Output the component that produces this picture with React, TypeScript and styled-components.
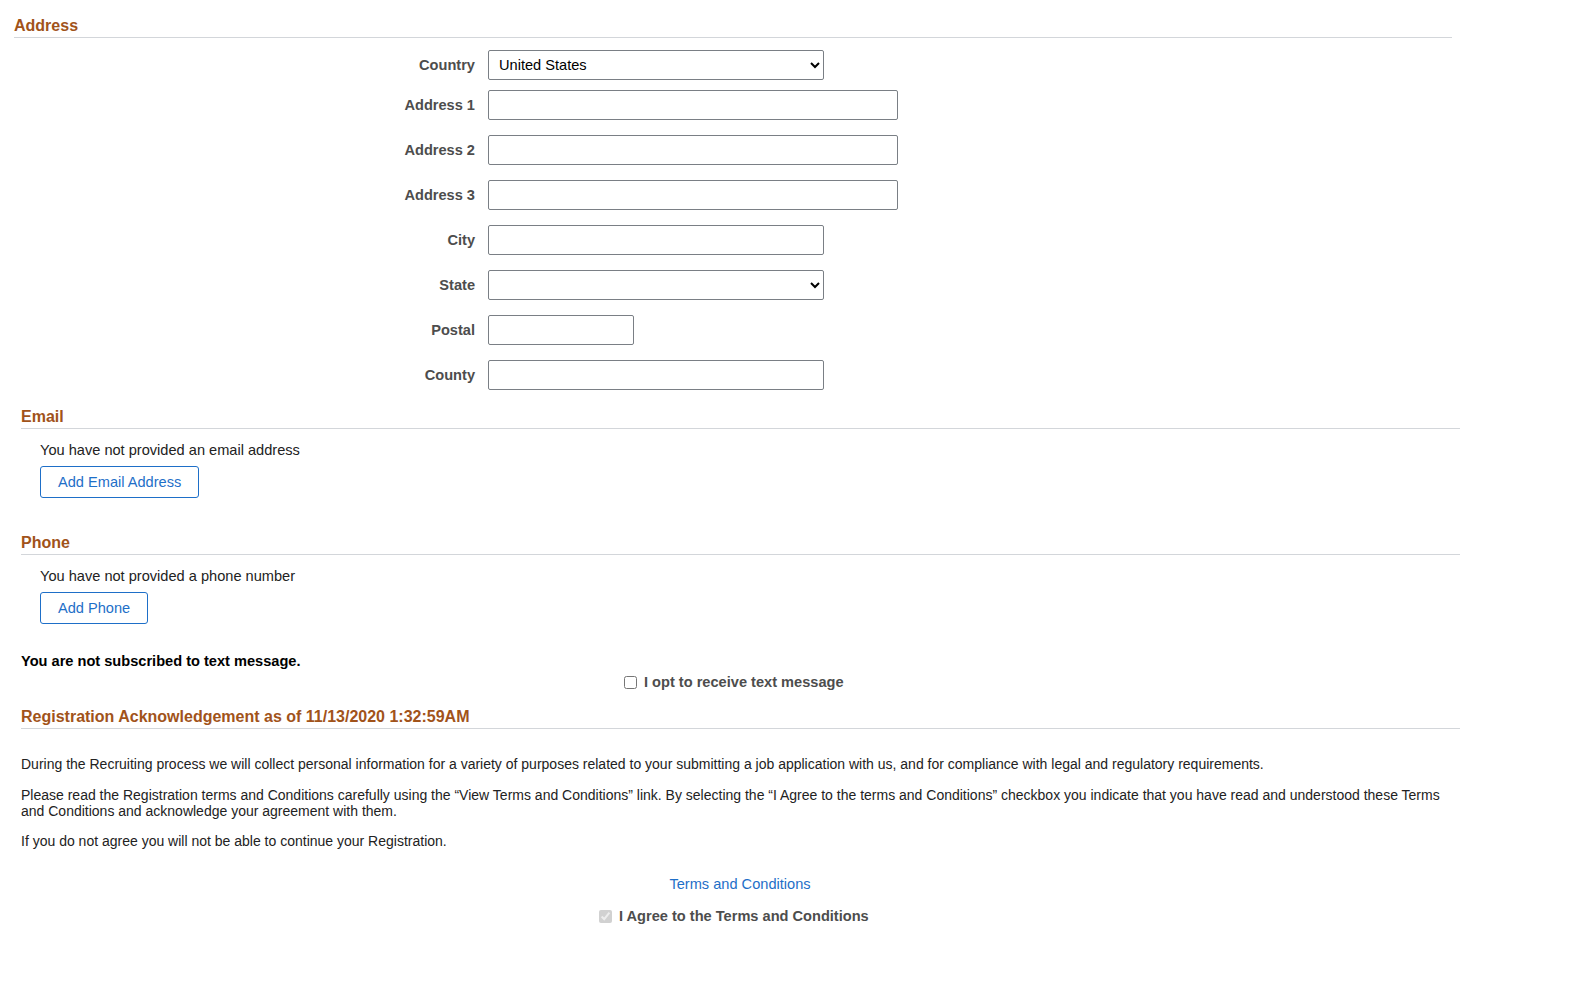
import React from "react";
import styled, { createGlobalStyle } from "styled-components";

const Global = createGlobalStyle`
  body { margin: 0; background: #fff; font-family: "Liberation Sans", Arial, sans-serif; }
`;

const Page = styled.div`
  padding: 17px 0 40px 0;
  width: 1460px;
`;

const Section = styled.section<{ $indent: number; $top: number }>`
  margin-left: ${(p) => p.$indent}px;
  margin-top: ${(p) => p.$top}px;
`;

const Heading = styled.h2`
  margin: 0;
  font-size: 16px;
  font-weight: bold;
  color: #a1531a;
  padding-bottom: 2px;
  border-bottom: 1px solid #d3d6da;
  line-height: 18px;
`;

const Form = styled.div`
  display: flex;
  flex-direction: column;
  gap: 15px;
  margin-top: 12px;
`;

const Row = styled.div<{ $tight?: boolean }>`
  display: flex;
  align-items: center;
  gap: 13px;
  margin-top: ${(p) => (p.$tight ? "-5px" : "0")};
`;

const Label = styled.label`
  width: 461px;
  text-align: right;
  font-size: 14.6px;
  font-weight: bold;
  color: #4d4d4d;
`;

const Input = styled.input<{ $w: number }>`
  box-sizing: border-box;
  width: ${(p) => p.$w}px;
  height: 30px;
  border: 1px solid #7a7f85;
  border-radius: 2px;
  font: 14.6px "Liberation Sans", Arial, sans-serif;
`;

const Select = styled.select`
  box-sizing: border-box;
  width: 336px;
  height: 30px;
  border: 1px solid #7a7f85;
  border-radius: 2px;
  padding-left: 6px;
  background: #fff;
  color: #000;
  font: 14.6px "Liberation Sans", Arial, sans-serif;
`;

const Body = styled.div`
  padding-left: 19px;
`;

const Text = styled.p`
  margin: 13px 0 0 0;
  font-size: 14.6px;
  color: #222;
`;

const Button = styled.button`
  margin-top: 8px;
  height: 32px;
  padding: 0 17px;
  border: 1px solid #1e6fc8;
  border-radius: 3px;
  background: #fff;
  color: #1e6fc8;
  font: 14.6px "Liberation Sans", Arial, sans-serif;
`;

const Strong = styled.p`
  margin: 29px 0 0 21px;
  font-size: 14.6px;
  font-weight: bold;
  color: #000;
`;

const CheckRow = styled.div<{ $left: number; $top: number }>`
  display: flex;
  align-items: center;
  gap: 7px;
  margin: ${(p) => p.$top}px 0 0 ${(p) => p.$left}px;
  font-size: 14.6px;
  font-weight: bold;
  color: #4d4d4d;
  input { margin: 0; width: 13px; height: 13px; }
`;

const Para = styled.p<{ $top: number }>`
  margin: ${(p) => p.$top}px 0 0 0;
  font-size: 14px;
  line-height: 16px;
  color: #222;
  padding-right: 10px;
`;

const Link = styled.a`
  display: block;
  text-align: center;
  margin: 27px 0 0 0;
  color: #1e6fc8;
  font-size: 14.6px;
  text-decoration: none;
  width: 1480px;
`;

export default function App() {
  return (
    <Page>
      <Global />
      <Section $indent={14} $top={0}>
        <Heading style={{ marginRight: 8 }}>Address</Heading>
        <Form>
          <Row><Label>Country</Label><Select defaultValue="US"><option value="US">United States</option></Select></Row>
          <Row $tight><Label>Address 1</Label><Input $w={410} /></Row>
          <Row><Label>Address 2</Label><Input $w={410} /></Row>
          <Row><Label>Address 3</Label><Input $w={410} /></Row>
          <Row><Label>City</Label><Input $w={336} /></Row>
          <Row><Label>State</Label><Select defaultValue=""><option value=""></option></Select></Row>
          <Row><Label>Postal</Label><Input $w={146} /></Row>
          <Row><Label>County</Label><Input $w={336} /></Row>
        </Form>
      </Section>
      <Section $indent={21} $top={18}>
        <Heading>Email</Heading>
        <Body>
          <Text>You have not provided an email address</Text>
          <Button>Add Email Address</Button>
        </Body>
      </Section>
      <Section $indent={21} $top={36}>
        <Heading>Phone</Heading>
        <Body>
          <Text>You have not provided a phone number</Text>
          <Button>Add Phone</Button>
        </Body>
      </Section>
      <Strong>You are not subscribed to text message.</Strong>
      <CheckRow $left={624} $top={5}><input type="checkbox" /><span>I opt to receive text message</span></CheckRow>
      <Section $indent={21} $top={18}>
        <Heading>Registration Acknowledgement as of 11/13/2020 1:32:59AM</Heading>
        <Para $top={27}>During the Recruiting process we will collect personal information for a variety of purposes related to your submitting a job application with us, and for compliance with legal and regulatory requirements.</Para>
        <Para $top={15}>Please read the Registration terms and Conditions carefully using the “View Terms and Conditions” link. By selecting the “I Agree to the terms and Conditions” checkbox you indicate that you have read and understood these Terms and Conditions and acknowledge your agreement with them.</Para>
        <Para $top={14}>If you do not agree you will not be able to continue your Registration.</Para>
      </Section>
      <Link href="#">Terms and Conditions</Link>
      <CheckRow $left={599} $top={16}><input type="checkbox" checked disabled readOnly /><span>I Agree to the Terms and Conditions</span></CheckRow>
    </Page>
  );
}
